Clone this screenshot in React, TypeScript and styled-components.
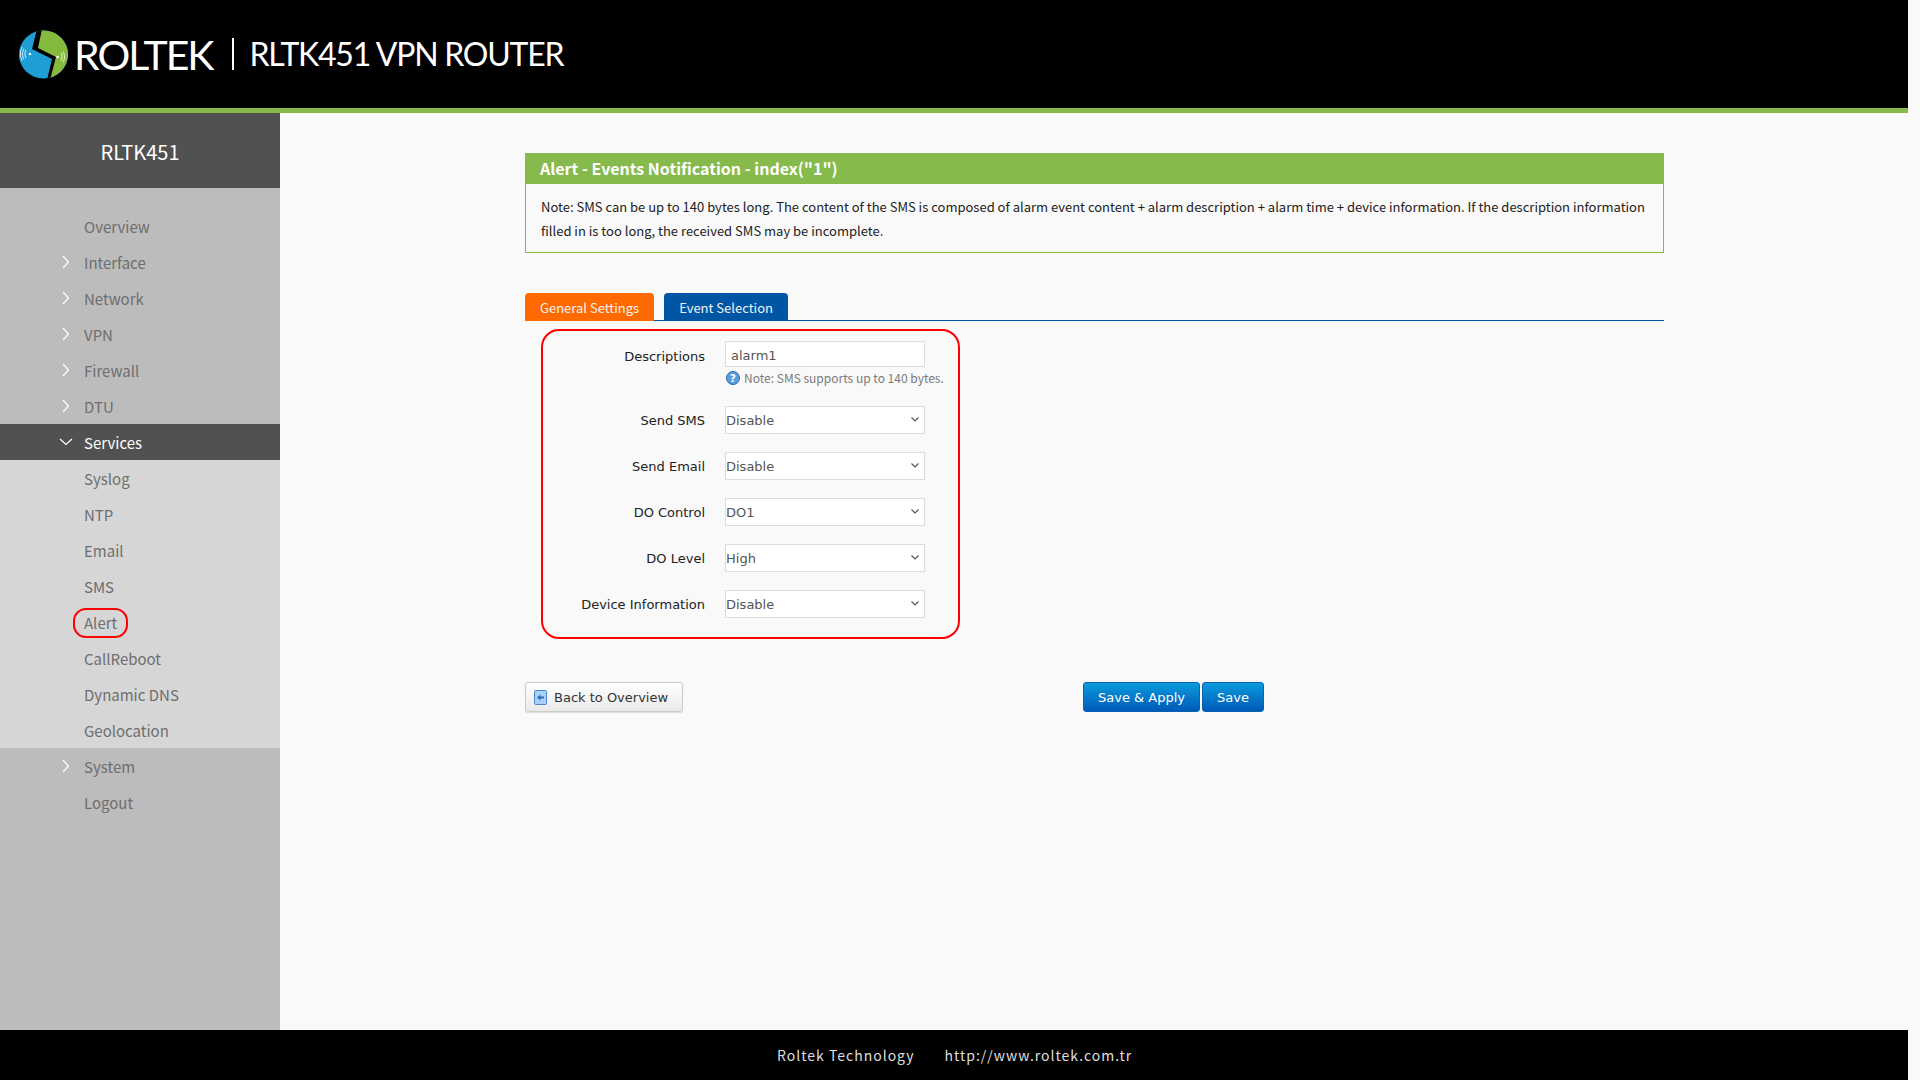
import React from 'react'
import styled, { createGlobalStyle } from 'styled-components'

const cjk = `'Noto Sans CJK SC', 'Noto Sans', sans-serif`
const dejavu = `'DejaVu Sans', Verdana, sans-serif`

const GlobalStyle = createGlobalStyle`
  html, body {
    margin: 0;
    padding: 0;
    background: #f9f9f9;
    overflow: hidden;
  }
  * {
    box-sizing: border-box;
  }
`

const Page = styled.div`
  width: 1908px;
  height: 1080px;
  display: flex;
  flex-direction: column;
  font-family: ${cjk};
`

const Header = styled.header`
  height: 113px;
  flex: none;
  background: #000;
  border-bottom: 5px solid #86ba4d;
  display: flex;
  align-items: center;
  padding-left: 19px;
  color: #fff;
`

const LogoMark = styled.svg`
  width: 49px;
  height: 49px;
  flex: none;
`

const Brand = styled.span`
  font-family: Lato, sans-serif;
  font-size: 41px;
  font-weight: 400;
  letter-spacing: -2px;
  margin-left: 6px;
  line-height: 1;
`

const Divider = styled.span`
  width: 2px;
  height: 32px;
  background: #fff;
  margin-left: 20px;
`

const Product = styled.span`
  font-family: Lato, sans-serif;
  font-size: 32px;
  font-weight: 400;
  letter-spacing: -1.25px;
  margin-left: 15px;
  line-height: 1;
`

const Body = styled.div`
  flex: 1;
  display: flex;
  min-height: 0;
`

const Sidebar = styled.aside`
  width: 280px;
  flex: none;
  background: #bcbcbc;
`

const SideTitle = styled.div`
  height: 75px;
  padding-top: 2px;
  background: #515151;
  color: #fff;
  font-size: 20px;
  display: flex;
  align-items: center;
  justify-content: center;
`

const Nav = styled.ul`
  list-style: none;
  margin: 0;
  padding: 20px 0 0;
`

const SubNav = styled.ul`
  list-style: none;
  margin: 0;
  padding: 0;
  background: #d6d6d6;
`

const NavItem = styled.li<{ $active?: boolean }>`
  height: 36px;
  display: flex;
  align-items: center;
  padding-left: 60px;
  font-size: 15px;
  color: ${(p) => (p.$active ? '#fff' : '#6e6e6e')};
  background: ${(p) => (p.$active ? '#515151' : 'transparent')};
`

const ChevronSlot = styled.span`
  width: 24px;
  flex: none;
  display: flex;
  align-items: center;
`

const NavLabel = styled.span<{ $circled?: boolean }>`
  position: relative;
  ${(p) =>
    p.$circled &&
    `
    &::after {
      content: '';
      position: absolute;
      left: -11px;
      right: -11px;
      top: -4px;
      bottom: -5px;
      border: 2px solid #f00;
      border-radius: 13px;
    }
  `}
`

const OpenChevron = styled.svg`
  margin-left: -1px;
`

const ClosedChevron = styled.svg`
  margin-left: 2px;
`

const Main = styled.main`
  flex: 1;
  padding: 40px 244px 0 245px;
`

const Notice = styled.section`
  border: 1px solid #86ba4d;
  border-top: 0;
`

const NoticeTitle = styled.h2`
  margin: 0 -1px;
  height: 31px;
  padding-left: 15px;
  background: #86ba4d;
  color: #fff;
  font-size: 16px;
  font-weight: 700;
  line-height: 31px;
`

const NoticeText = styled.p`
  margin: 0;
  padding: 11px 15px 9px;
  font-size: 13px;
  line-height: 24px;
  color: #222;
`

const Tabs = styled.div`
  margin-top: 40px;
  height: 28px;
  display: flex;
  gap: 10px;
  border-bottom: 1px solid #0055a5;
`

const Tab = styled.div<{ $selected?: boolean }>`
  height: 28px;
  padding: 0 15px;
  border-radius: 4px 4px 0 0;
  background: ${(p) => (p.$selected ? '#ff6a00' : '#0055a5')};
  color: #f4f4f4;
  font-size: 13px;
  line-height: 30px;
`

const FormBox = styled.form`
  margin: 8px 0 0 16px;
  width: 419px;
  height: 310px;
  border: 2px solid #f00;
  border-radius: 18px;
  padding-top: 10px;
  display: flex;
  flex-direction: column;
  gap: 18px;
`

const Row = styled.div`
  display: grid;
  grid-template-columns: 162px 200px;
  column-gap: 20px;
  align-items: start;
`

const Label = styled.label<{ $offset?: number }>`
  height: 28px;
  font-family: ${dejavu};
  font-size: 13px;
  color: #222;
  text-align: right;
  line-height: 28px;
  padding-top: ${(p) => p.$offset ?? 1}px;
  white-space: nowrap;
`

const TextInput = styled.input`
  display: block;
  width: 200px;
  height: 26px;
  border: 1px solid #ddd;
  background: #fff;
  padding: 3px 5px 0;
  font-family: ${dejavu};
  font-size: 13px;
  color: #555;
  outline: none;
`

const Hint = styled.div`
  margin: 2px 0;
  height: 17px;
  display: flex;
  align-items: center;
  gap: 4px;
  font-size: 12px;
  color: #7a7a7a;
  white-space: nowrap;
`

const HintGlyph = styled.svg`
  width: 14px;
  height: 14px;
  flex: none;
  margin-left: 1px;
`

const SelectWrap = styled.div`
  position: relative;
  width: 200px;
  height: 28px;
`

const Select = styled.select`
  display: block;
  width: 100%;
  height: 100%;
  appearance: none;
  border: 1px solid #ddd;
  border-radius: 0;
  background: #fff;
  padding: 0;
  font-family: ${dejavu};
  font-size: 13px;
  color: #555;
  outline: none;
`

const SelectArrow = styled.svg`
  position: absolute;
  right: 6px;
  top: 11px;
  pointer-events: none;
`

const Actions = styled.div`
  margin-top: 43px;
  display: flex;
  align-items: center;
`

const BackButton = styled.button`
  width: 158px;
  height: 30px;
  display: flex;
  align-items: center;
  gap: 7px;
  padding: 0 0 0 8px;
  border: 1px solid #ccc;
  border-radius: 3px;
  background: linear-gradient(#fff, #e9e9e9);
  box-shadow: 0 1px 1px rgba(0, 0, 0, 0.12);
  font-family: ${dejavu};
  font-size: 13px;
  color: #333;
`

const SaveGroup = styled.div`
  margin-left: 400px;
  display: flex;
  gap: 2px;
`

const PrimaryButton = styled.button<{ $width: number }>`
  width: ${(p) => p.$width}px;
  height: 30px;
  padding: 0;
  border: 1px solid #0a62b4;
  border-radius: 3px;
  background: linear-gradient(#0a9bdc, #0059b8);
  font-family: ${dejavu};
  font-size: 13px;
  color: #fff;
`

const Footer = styled.footer`
  height: 50px;
  flex: none;
  background: #000;
  color: #dfdfdf;
  display: flex;
  align-items: center;
  padding-left: 777px;
  gap: 30px;
  font-size: 14px;
  letter-spacing: 1px;
`

const Chevron = ({ open }: { open?: boolean }) =>
  open ? (
    <OpenChevron width='14' height='8' viewBox='0 0 14 8' fill='none' stroke='#fff' strokeWidth='1.2'>
      <path d='M1 1l6 5.5L13 1' />
    </OpenChevron>
  ) : (
    <ClosedChevron width='8' height='14' viewBox='0 0 8 14' fill='none' stroke='#fff' strokeWidth='1.2'>
      <path d='M1 1l5.5 6L1 13' />
    </ClosedChevron>
  )

const Logo = () => (
  <LogoMark viewBox='0 0 49 49'>
    <clipPath id='logo-disc'>
      <ellipse cx='24.5' cy='24.5' rx='24.5' ry='24' />
    </clipPath>
    <g clipPath='url(#logo-disc)'>
      <rect width='49' height='49' fill='#1f9ed6' />
      <path d='M19 0H49V49H29L35 28L17 19Z' fill='#86ba3f' />
      <path d='M18 -1L13 19L33 29L28 50L31 50L37 27L19 18L23 -1Z' fill='#000' />
    </g>
    <g fill='none' stroke='#fff' strokeWidth='0.8'>
      <path d='M7 20c-1.4 2.4-1.4 5.6 0 8' />
      <path d='M5 18.500c-2 3.400-2 7.600 0 11' />
      <path d='M3.200 17c-2.400 4.400-2.400 9.600 0 14' />
      <path d='M42 23c1.400 2.400 1.400 5.600 0 8' />
      <path d='M44 21.500c2 3.400 2 7.600 0 11' />
    </g>
    <circle cx='11' cy='24' r='1.300' fill='#fff' />
    <circle cx='38.500' cy='27' r='1.300' fill='#fff' />
  </LogoMark>
)

const HintIcon = () => (
  <HintGlyph viewBox='0 0 14 14'>
    <circle cx='7' cy='7' r='6.500' fill='#5b9fdc' stroke='#2a6aa8' />
    <text x='7' y='10.500' fontSize='10' fontWeight='700' textAnchor='middle' fill='#fff' fontFamily='DejaVu Sans'>
      ?
    </text>
  </HintGlyph>
)

const BackIcon = () => (
  <svg width='13' height='15' viewBox='0 0 13 15'>
    <rect x='0.500' y='0.500' width='12' height='14' rx='1' fill='#a9d0f5' stroke='#4a86c5' />
    <path d='M3 7.500L6.500 4.500V6.500H10V8.500H6.500V10.500Z' fill='#2a6fb8' />
  </svg>
)

const topItems = ['Interface', 'Network', 'VPN', 'Firewall', 'DTU']
const serviceItems = ['Syslog', 'NTP', 'Email', 'SMS', 'Alert', 'CallReboot', 'Dynamic DNS', 'Geolocation']
const selects = [
  { label: 'Send SMS', value: 'Disable', options: ['Disable', 'Enable'] },
  { label: 'Send Email', value: 'Disable', options: ['Disable', 'Enable'] },
  { label: 'DO Control', value: 'DO1', options: ['DO1', 'DO2'] },
  { label: 'DO Level', value: 'High', options: ['High', 'Low'] },
  { label: 'Device Information', value: 'Disable', options: ['Disable', 'Enable'] },
]

export default function App() {
  return (
    <Page>
      <GlobalStyle />
      <Header>
        <Logo />
        <Brand>ROLTEK</Brand>
        <Divider />
        <Product>RLTK451 VPN ROUTER</Product>
      </Header>
      <Body>
        <Sidebar>
          <SideTitle>RLTK451</SideTitle>
          <Nav>
            <NavItem>
              <ChevronSlot />
              <NavLabel>Overview</NavLabel>
            </NavItem>
            {topItems.map((item) => (
              <NavItem key={item}>
                <ChevronSlot>
                  <Chevron />
                </ChevronSlot>
                <NavLabel>{item}</NavLabel>
              </NavItem>
            ))}
            <NavItem $active>
              <ChevronSlot>
                <Chevron open />
              </ChevronSlot>
              <NavLabel>Services</NavLabel>
            </NavItem>
            <SubNav>
              {serviceItems.map((item) => (
                <NavItem key={item}>
                  <ChevronSlot />
                  <NavLabel $circled={item === 'Alert'}>{item}</NavLabel>
                </NavItem>
              ))}
            </SubNav>
            <NavItem>
              <ChevronSlot>
                <Chevron />
              </ChevronSlot>
              <NavLabel>System</NavLabel>
            </NavItem>
            <NavItem>
              <ChevronSlot />
              <NavLabel>Logout</NavLabel>
            </NavItem>
          </Nav>
        </Sidebar>
        <Main>
          <Notice>
            <NoticeTitle>Alert - Events Notification - index("1")</NoticeTitle>
            <NoticeText>
              Note: SMS can be up to 140 bytes long. The content of the SMS is composed of alarm event content + alarm
              description + alarm time + device information. If the description information filled in is too long, the
              received SMS may be incomplete.
            </NoticeText>
          </Notice>
          <Tabs>
            <Tab $selected>General Settings</Tab>
            <Tab>Event Selection</Tab>
          </Tabs>
          <FormBox>
            <Row>
              <Label $offset={2}>Descriptions</Label>
              <div>
                <TextInput defaultValue='alarm1' />
                <Hint>
                  <HintIcon />
                  Note: SMS supports up to 140 bytes.
                </Hint>
              </div>
            </Row>
            {selects.map((s) => (
              <Row key={s.label}>
                <Label>{s.label}</Label>
                <SelectWrap>
                  <Select defaultValue={s.value}>
                    {s.options.map((o) => (
                      <option key={o}>{o}</option>
                    ))}
                  </Select>
                  <SelectArrow width='8' height='5' viewBox='0 0 8 5' fill='none' stroke='#555' strokeWidth='1.2'>
                    <path d='M0.500 0.500L4 4L7.500 0.500' />
                  </SelectArrow>
                </SelectWrap>
              </Row>
            ))}
          </FormBox>
          <Actions>
            <BackButton type='button'>
              <BackIcon />
              Back to Overview
            </BackButton>
            <SaveGroup>
              <PrimaryButton type='button' $width={117}>
                Save &amp; Apply
              </PrimaryButton>
              <PrimaryButton type='button' $width={62}>
                Save
              </PrimaryButton>
            </SaveGroup>
          </Actions>
        </Main>
      </Body>
      <Footer>
        <span>Roltek Technology</span>
        <span>http://www.roltek.com.tr</span>
      </Footer>
    </Page>
  )
}
